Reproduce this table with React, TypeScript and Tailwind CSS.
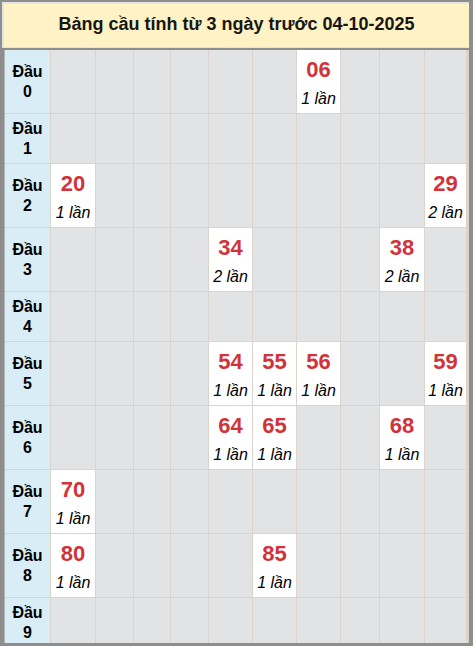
import React from 'react'

// count by number, column = units digit, row = tens digit
const hits: Record<string, number> = {
  '06': 1,
  '20': 1,
  '29': 2,
  '34': 2,
  '38': 2,
  '54': 1,
  '55': 1,
  '56': 1,
  '59': 1,
  '64': 1,
  '65': 1,
  '68': 1,
  '70': 1,
  '80': 1,
  '85': 1,
}

const tallRows = [0, 2, 3, 5, 6, 7, 8]

const App: React.FC = () => {
  return (
    <div
      className="w-[473px] h-[646px] bg-[#8e8e8e] flex flex-col pl-[2px] pt-[2px] pr-[4px] pb-[3px] overflow-hidden"
      style={{ fontFamily: '"Liberation Sans", Arial, sans-serif' }}
    >
      <div className="h-[46px] shrink-0 bg-[#fff2c4] border-l-2 border-t-2 border-b border-[#e4e4e4] flex items-center justify-center">
        <h1 className="text-[18px] font-bold text-[#161616] -mt-[2px]">Bảng cầu tính từ 3 ngày trước 04-10-2025</h1>
      </div>

      <div className="ml-[2px] mt-[2px] flex-1 overflow-hidden border-l border-[#b4b4b4] bg-[#dcd4cb] pr-px">
        <div className="grid grid-cols-[45px_44px_37px_36px_37px_43px_43px_43px_38px_44px_41px] gap-px">
          {Array.from({ length: 10 }, (_, r) => {
            const tall = tallRows.includes(r)
            return (
              <React.Fragment key={r}>
                <div
                  className={
                    (tall ? 'h-[63px]' : 'h-[49px]') +
                    ' bg-[#d9edf7] flex flex-col items-center justify-center text-[16px] leading-[20px] font-bold text-black'
                  }
                >
                  <span>Đầu</span>
                  <span>{r}</span>
                </div>
                {Array.from({ length: 10 }, (_, c) => {
                  const num = `${r}${c}`
                  const n = hits[num]
                  if (!n) {
                    return <div key={c} className={(tall ? 'h-[63px]' : 'h-[49px]') + ' bg-[#e2e3e5]'} />
                  }
                  return (
                    <div key={c} className="h-[63px] bg-white flex flex-col items-center pt-[7px]">
                      <span className="text-[22px] leading-[26px] font-bold text-[#d0343a]">{num}</span>
                      <span className="text-[16px] leading-[22px] italic text-black mt-[5px] whitespace-nowrap">{n} lần</span>
                    </div>
                  )
                })}
              </React.Fragment>
            )
          })}
        </div>
      </div>
    </div>
  )
}

export default App
